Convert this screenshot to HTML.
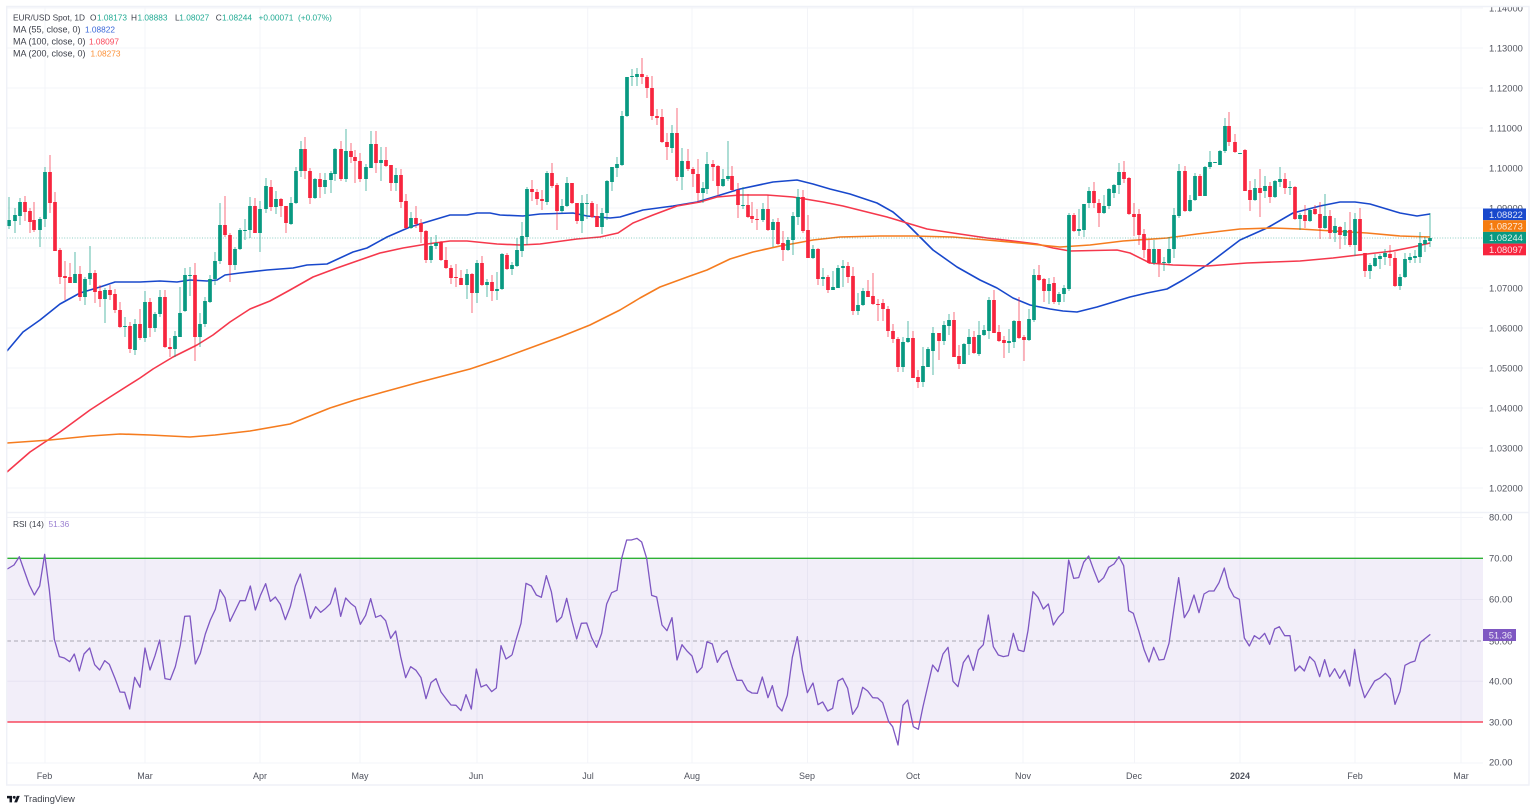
<!DOCTYPE html>
<html lang="en">
<head>
<meta charset="utf-8">
<title>EUR/USD Spot, 1D</title>
<style>
html,body{margin:0;padding:0;background:#fff;width:1536px;height:810px;overflow:hidden}
svg{display:block}
text{font-family:"Liberation Sans",sans-serif}
.ax{font-size:9.4px;fill:#50535e}
.lg{font-size:8.3px;fill:#3e414b}
.lm{font-size:9px;fill:#3e414b}
.gr{font-size:8.3px;fill:#22ab94}
.tg{font-size:9.4px;fill:#fff;fill-opacity:.85}
.tm{font-size:9px;fill:#50535e;text-anchor:middle}
.g{stroke:#f3f4f8;stroke-width:1;fill:none}
</style>
</head>
<body>
<svg width="1536" height="810" viewBox="0 0 1536 810" xmlns="http://www.w3.org/2000/svg">
<rect width="1536" height="810" fill="#fff"/>

<!-- grid -->
<path class="g" d="M45 7V763M145 7V763M260 7V763M360 7V763M477 7V763M587.7 7V763M692 7V763M807.5 7V763M913 7V763M1023 7V763M1134.5 7V763M1240 7V763M1355 7V763M1461 7V763"/>
<path class="g" d="M7 8H1483M7 48H1483M7 88H1483M7 128H1483M7 168H1483M7 208H1483M7 248H1483M7 288H1483M7 328H1483M7 368H1483M7 408H1483M7 448H1483M7 488H1483M7 517.5H1483M7 599.5H1483M7 681.3H1483"/>

<!-- moving averages -->
<path fill="none" stroke="#1848cc" stroke-width="1.6" stroke-linejoin="round" d="M7 351L23 332L40 320L60 304L80 293L100 287L115 282L140 282L160 281L177 282L190 280L207 281L217 280L225 275L240 273L267 270L293 268L307 265L327 264L353 252L367 248L387 237L410 227L430 221L450 215L467 215L477 213L490 213L500 215L523 216L540 214L573 213L587 216L610 218L620 217L643 210L673 206L697 202L717 196L740 189L773 182L797 180L813 184L830 189L850 194L877 203L893 212L907 224L920 237L933 250L957 267L980 280L997 288L1013 298L1030 305L1050 309L1063 311L1077 312L1097 307L1130 297L1147 293L1167 289L1183 280L1207 265L1240 240L1267 228L1293 213L1320 206L1340 202L1355 202L1370 204L1390 210L1400 213L1417 216L1430 214"/>
<path fill="none" stroke="#f5384c" stroke-width="1.6" stroke-linejoin="round" d="M7 472L30 452L60 432L90 410L110 397L140 378L153 369L173 357L197 345L213 335L230 322L250 309L270 301L290 290L313 277L337 268L357 261L380 253L403 248L427 244L450 241L467 241L497 244L520 245L540 244L577 239L600 237L618 233L633 223L653 215L677 206L700 202L717 197L740 195L767 195L793 197L823 202L843 206L867 212L887 217L907 223L927 229L953 233L987 238L1013 241L1037 244L1053 248L1070 251L1117 250L1130 253L1150 263L1173 265L1207 266L1247 263L1273 262L1300 261L1333 258L1367 254L1393 251L1413 247L1430 243"/>
<path fill="none" stroke="#f57c1f" stroke-width="1.6" stroke-linejoin="round" d="M7 443L50 440L90 436L120 434L150 435L190 437L215 435L250 431L290 424L310 416L330 408L355 400L380 393L420 382L470 369L500 359L530 348L560 337L590 325L620 310L640 298L660 287L690 276L707 270L730 259L753 252L780 246L797 243L813 240L840 237L880 236L913 236L953 237L987 240L1020 243L1040 245L1060 247L1090 245L1123 241L1167 238L1197 234L1240 229L1273 228L1300 229L1333 231L1367 233L1400 236L1430 237"/>

<!-- last price line -->
<path d="M7 238H1483" stroke="#089981" stroke-opacity=".45" stroke-width="1" stroke-dasharray="1 1.6" fill="none"/>

<!-- candle wicks -->
<path fill="none" stroke="#089981" stroke-opacity=".6" stroke-width="1.1" d="M9 197V229M15 208V233M20 198V225M40 217V247M45 167V227M75 252V283M85 277V305M90 246V285M105 288V323M125 317V337M135 319V355M145 291V342M155 312V332M160 290V317M175 331V357M180 287V337M185 268V312M190 267V296M200 313V347M205 297V327M210 275V303M215 252V285M220 203V264M235 247V270M240 228V250M245 219V240M250 197V238M260 201V252M266 178V213M276 191V214M291 197V225M296 167V204M301 141V177M315 178V199M325 173V194M331 171V193M335 148V181M346 129V182M366 164V191M371 131V168M381 147V181M396 168V191M411 212V229M431 237V263M436 235V249M467 269V299M477 260V303M487 279V297M497 272V300M502 253V290M512 262V275M517 238V267M522 222V257M527 187V245M547 171V205M562 199V213M567 177V207M582 195V233M587 194V219M602 208V234M607 180V220M612 167V191M617 157V177M622 111V166M627 77V117M632 69V86M637 68V86M672 125V153M682 148V190M703 182V203M707 152V194M723 169V187M728 141V181M743 187V209M763 203V222M773 219V247M788 237V251M793 212V255M798 189V225M813 245V259M823 268V286M833 271V290M838 265V288M843 260V287M858 293V315M863 288V306M903 337V372M908 321V343M923 347V387M928 347V367M933 327V375M944 321V345M949 314V335M964 343V364M969 329V355M979 321V356M984 325V336M989 297V339M1009 329V353M1014 320V348M1029 309V341M1034 269V322M1049 278V304M1059 292V305M1064 285V302M1069 213V291M1079 209V236M1084 204V237M1089 187V208M1104 195V214M1109 188V209M1114 184V198M1119 163V194M1154 240V265M1164 257V271M1169 237V264M1174 208V258M1179 164V218M1190 195V212M1195 173V201M1205 166V196M1210 151V169M1220 150V165M1225 118V153M1255 179V201M1265 176V198M1275 180V198M1280 167V187M1290 181V195M1300 213V230M1310 208V222M1325 194V229M1335 218V242M1345 222V245M1355 213V256M1370 263V279M1375 254V267M1380 254V269M1385 249V265M1400 274V290M1405 253V278M1410 253V263M1415 250V263M1420 232V263M1425 237V252M1430 213V247"/>
<path fill="none" stroke="#f7253e" stroke-opacity=".6" stroke-width="1.1" d="M25 196V221M30 208V233M34 202V232M50 155V213M55 192V251M60 248V284M65 261V300M70 263V283M80 266V301M95 270V303M100 285V307M110 285V300M115 289V313M120 302V328M130 322V353M140 309V340M150 298V337M165 290V348M170 338V357M195 263V361M225 196V237M230 233V282M255 198V233M271 180V211M281 198V217M286 206V233M305 137V179M310 168V204M320 173V198M341 141V181M351 143V163M355 150V183M360 153V182M376 131V173M386 147V167M391 165V191M401 169V208M406 194V229M416 206V228M421 219V243M426 230V263M441 241V261M446 247V269M451 265V284M456 264V287M461 270V285M472 273V313M482 256V286M492 275V301M507 253V270M532 180V201M537 189V205M542 190V210M552 163V188M557 183V230M572 183V204M577 203V224M592 201V218M597 204V227M642 58V84M647 75V98M652 76V120M657 109V125M662 109V143M667 133V160M677 108V181M688 149V171M693 167V187M698 159V201M713 160V181M718 165V196M732 166V191M738 183V218M748 194V218M752 202V223M757 209V230M768 195V231M778 218V245M783 231V261M803 190V233M808 215V258M818 248V285M828 275V293M848 262V283M853 267V315M868 280V297M873 273V305M878 299V321M883 299V321M888 306V337M893 324V343M898 337V372M913 331V378M918 370V388M939 333V360M954 312V357M959 345V369M974 331V354M994 290V333M999 325V342M1004 336V358M1019 297V339M1024 335V361M1039 265V281M1044 278V302M1054 277V304M1074 213V232M1094 182V208M1099 199V227M1124 161V183M1129 177V215M1134 203V236M1139 209V245M1144 229V258M1149 240V264M1159 249V277M1185 166V212M1200 174V196M1229 112V146M1235 134V153M1245 149V191M1250 181V211M1260 169V217M1270 182V203M1285 173V194M1295 186V220M1305 205V228M1315 205V215M1320 202V239M1330 210V239M1340 226V249M1350 212V247M1360 208V251M1365 253V277M1390 245V266M1395 252V287"/>
<!-- candle bodies -->
<path fill="none" stroke="#089981" stroke-width="3.7" d="M9 220V226M15 215V221M20 202V216M40 219V230M45 172V219M75 274V283M85 279V297M90 273V279M105 290V299M125 326V327M135 324V350M145 302V338M155 314V328M160 297V314M175 336V349M180 313V337M185 275V311M190 275V276M200 324V337M205 301V324M210 279V302M215 261V279M220 225V261M235 249V265M240 230V249M245 230V231M250 206V230M260 209V233M266 186V209M276 199V207M291 203V224M296 171V203M301 149V171M315 179V198M325 180V187M331 173V180M335 149V174M346 151V179M366 167V179M371 144V168M381 160V163M396 175V183M411 218V228M431 246V260M436 243V246M467 274V285M477 263V293M487 282V285M497 289V291M502 254V289M512 265V269M517 250V266M522 236V251M527 189V237M547 173V202M562 206V211M567 183V206M582 203V221M587 203V204M602 213V227M607 181V213M612 167V182M617 164V168M622 116V165M627 77V116M632 76V77M637 74V77M672 133V148M682 161V177M703 188V193M707 164V189M723 179V186M728 176V179M743 205V206M763 209V220M773 222V230M788 240V250M793 216V240M798 197V217M813 249V258M823 277V279M833 287V290M838 268V288M843 266V268M858 305V311M863 291V305M903 342V367M908 338V342M923 366V382M928 349V367M933 333V351M944 325V341M949 320V326M964 344V364M969 337V344M979 335V354M984 330V335M989 300V331M1009 341V343M1014 321V342M1029 319V340M1034 275V320M1049 284V291M1059 294V302M1064 288V294M1069 215V289M1079 229V231M1084 204V230M1089 191V203M1104 206V213M1109 189V206M1114 185V193M1119 172V185M1154 249V263M1164 262V263M1169 249V263M1174 215V249M1179 171V216M1190 200V211M1195 176V200M1205 167V196M1210 162V167M1215 162V163M1220 151V165M1225 126V151M1240 153V154M1255 188V200M1265 186V191M1275 181V197M1280 179V182M1290 187V188M1300 215V219M1310 210V221M1325 216V228M1335 226V233M1345 230V236M1355 219V245M1370 265V271M1375 258V266M1380 256V259M1385 253V257M1400 277V286M1405 259V277M1410 257V260M1415 256V258M1420 243V257M1425 240V244M1430 238V241"/>
<path fill="none" stroke="#f7253e" stroke-width="3.7" d="M25 202V212M30 211V222M34 220V230M50 172V203M55 202V251M60 250V277M65 276V278M70 277V283M80 274V297M95 273V292M100 291V299M110 290V295M115 294V310M120 310V327M130 326V349M140 324V338M150 302V328M165 297V347M170 347V349M195 275V337M225 225V235M230 235V265M255 206V233M271 187V207M281 199V206M286 206V223M305 149V171M310 171V198M320 179V187M341 149V179M351 151V157M355 157V161M360 161V179M376 144V163M386 160V166M391 165V183M401 175V202M406 201V228M416 218V224M421 223V232M426 231V260M441 242V260M446 260V268M451 268V278M456 277V278M461 278V285M472 274V293M482 263V285M492 282V291M507 255V269M532 189V192M537 192V199M542 199V201M552 173V186M557 185V211M572 183V203M577 203V221M592 203V217M597 216V227M642 74V77M647 77V88M652 88V116M657 116V118M662 117V142M667 142V147M677 133V177M688 161V169M693 169V174M698 174V193M713 164V167M718 166V186M732 176V190M738 190V205M748 205V217M752 216V219M757 219V220M768 209V230M778 222V244M783 243V250M803 197V231M808 230V258M818 249V279M828 277V290M848 266V277M853 276V311M868 291V297M873 296V304M878 304V305M883 303V309M888 309V331M893 331V339M898 339V367M913 338V378M918 377V382M939 333V341M954 320V357M959 356V364M974 337V353M994 300V333M999 332V341M1004 340V343M1019 321V338M1024 337V340M1039 275V280M1044 279V291M1054 283V302M1074 215V231M1094 191V203M1099 203V213M1124 172V179M1129 178V214M1134 214V217M1139 214V235M1144 234V250M1149 249V263M1159 249V263M1185 171V211M1200 176V196M1229 126V142M1235 142V152M1245 150V191M1250 190V200M1260 188V193M1270 186V197M1285 179V188M1295 187V219M1305 215V221M1315 209V214M1320 214V228M1330 216V233M1340 227V235M1350 230V245M1360 219V251M1365 253V271M1390 254V258M1395 258V286"/>

<!-- RSI -->
<rect x="7" y="558" width="1476" height="164" fill="#7e57c2" fill-opacity=".1"/>
<path d="M7 641H1483" stroke="#aaa8b4" stroke-width="1" stroke-dasharray="4 3" fill="none"/>
<path d="M7 558.3H1483" stroke="#2eb135" stroke-width="1.3" fill="none"/>
<path d="M7 722H1483" stroke="#f7253e" stroke-width="1.3" fill="none"/>
<g fill="none" stroke="#7e57c2" stroke-width="3.9" stroke-linejoin="round">
<path transform="translate(0 510) scale(.33333)" d="M22 177L42 165L58 140L72 180L88 225L103 255L119 228L134 133L148 240L163 388L178 440L193 444L209 455L223 432L238 483L252 432L269 414L284 464L299 480L314 452L328 463L345 505L360 546L374 547L389 597L404 502L420 532L435 414L450 480L465 437L479 390L495 506L511 509L526 470L541 405L554 319L570 318L586 462L601 430L616 372L631 330L646 298L660 239L675 263L690 334L705 303L720 272L736 272L751 228L766 300L781 257L797 221L811 274L826 261L841 283L856 329L871 290L886 228L901 192L916 256L931 325L947 290L962 307L977 295L991 281L1006 234L1022 319L1037 264L1052 280L1066 291L1081 343L1097 316L1112 266L1127 322L1142 316L1157 332L1172 385L1187 363L1202 440L1217 503L1232 470L1248 481L1263 503L1278 566L1293 518L1308 506L1323 546L1338 566L1353 585L1368 586L1383 602L1398 554L1414 597L1429 477L1443 531L1459 524L1475 545L1489 534L1503 407L1518 447L1536 435"/>
<path transform="translate(512 510) scale(.33333)" d="M0 435L12 390L27 340L42 220L58 228L73 255L88 262L103 197L118 245L134 336L149 321L164 265L179 330L194 387L208 340L224 339L239 383L254 412L269 370L284 282L299 248L315 241L329 145L344 90L358 90L375 85L389 96L404 145L419 256L434 261L450 345L465 362L480 323L495 450L510 404L525 423L540 438L555 488L570 472L585 395L601 402L616 457L630 433L645 422L660 470L675 511L690 511L706 541L720 549L736 550L751 501L768 563L781 527L796 588L810 603L826 556L841 442L856 380L871 480L886 548L903 519L918 584L932 576L947 603L962 595L978 513L992 505L1007 535L1022 613L1037 590L1052 532L1067 543L1082 563L1097 564L1112 578L1130 635L1142 650L1158 705L1173 586L1187 570L1204 650L1219 658L1233 590L1248 525L1262 465L1278 485L1293 432L1308 412L1323 514L1338 530L1354 458L1369 436L1384 481L1399 420L1414 404L1429 315L1444 410L1459 435L1474 440L1489 437L1504 370L1519 420L1536 425"/>
<path transform="translate(1024 510) scale(.33333)" d="M0 425L12 362L27 245L42 262L58 297L73 282L88 345L103 322L118 306L134 150L149 205L164 203L179 157L194 138L210 182L224 217L239 203L254 172L270 162L285 140L299 167L314 302L328 310L345 365L360 418L375 456L389 412L405 450L420 448L435 400L450 295L464 203L481 323L495 300L510 255L525 308L540 252L555 243L570 243L585 218L601 174L615 232L630 260L646 268L661 384L676 408L691 377L706 387L722 370L737 403L752 357L766 350L782 377L798 377L813 483L827 468L841 483L857 440L872 455L887 500L902 449L917 500L932 476L947 505L962 480L977 528L992 418L1007 512L1022 563L1037 538L1052 513L1067 505L1084 490L1099 506L1113 583L1128 545L1143 466L1158 458L1173 453L1189 397L1204 385L1219 373"/>
</g>

<!-- price axis -->
<g class="ax">
<text x="1489" y="11.3">1.14000</text>
<text x="1489" y="51.3">1.13000</text>
<text x="1489" y="91.3">1.12000</text>
<text x="1489" y="131.3">1.11000</text>
<text x="1489" y="171.3">1.10000</text>
<text x="1489" y="211.3">1.09000</text>
<text x="1489" y="291.3">1.07000</text>
<text x="1489" y="331.3">1.06000</text>
<text x="1489" y="371.3">1.05000</text>
<text x="1489" y="411.3">1.04000</text>
<text x="1489" y="451.3">1.03000</text>
<text x="1489" y="491.3">1.02000</text>
<text x="1489" y="520.6">80.00</text>
<text x="1489" y="561.6">70.00</text>
<text x="1489" y="602.6">60.00</text>
<text x="1489" y="644.3">50.00</text>
<text x="1489" y="684.6">40.00</text>
<text x="1489" y="725.3">30.00</text>
<text x="1489" y="765.6">20.00</text>
</g>

<!-- price tags -->
<rect x="1483" y="208.5" width="43" height="11.7" fill="#1848cc"/>
<rect x="1483" y="220.2" width="43" height="11.7" fill="#f57c0f"/>
<rect x="1483" y="231.9" width="43" height="11.7" fill="#089981"/>
<rect x="1483" y="243.6" width="43" height="11.7" fill="#f7253e"/>
<text class="tg" x="1489" y="217.8">1.08822</text>
<text class="tg" x="1489" y="229.5">1.08273</text>
<text class="tg" x="1489" y="241.2">1.08244</text>
<text class="tg" x="1489" y="252.9">1.08097</text>
<rect x="1483" y="629" width="33" height="12" fill="#7e57c2"/>
<text class="tg" x="1488.7" y="638.4">51.36</text>

<!-- time axis -->
<path d="M7 763H1483" stroke="#f3f4f8" stroke-width="1" fill="none"/>
<g class="tm">
<text x="44.5" y="779">Feb</text>
<text x="145" y="779">Mar</text>
<text x="260" y="779">Apr</text>
<text x="360" y="779">May</text>
<text x="476" y="779">Jun</text>
<text x="588" y="779">Jul</text>
<text x="692" y="779">Aug</text>
<text x="807" y="779">Sep</text>
<text x="913" y="779">Oct</text>
<text x="1023" y="779">Nov</text>
<text x="1134" y="779">Dec</text>
<text x="1240" y="779" font-weight="700">2024</text>
<text x="1355" y="779">Feb</text>
<text x="1461" y="779">Mar</text>
</g>

<!-- frame -->
<rect x="0" y="0" width="1536" height="6" fill="#fff"/>
<path d="M6.7 6.5H1529V785H6.7Z" fill="none" stroke="#eff1f7" stroke-width="1.4"/>
<path d="M7 512.5H1529" stroke="#eff1f7" stroke-width="1.4" fill="none"/>

<!-- legend -->
<text class="lg" x="13" y="20.6">EUR/USD Spot, 1D</text>
<text class="lg" x="90" y="20.6">O</text><text class="gr" x="97" y="20.6">1.08173</text>
<text class="lg" x="131" y="20.6">H</text><text class="gr" x="137.5" y="20.6">1.08883</text>
<text class="lg" x="175" y="20.6">L</text><text class="gr" x="179.3" y="20.6">1.08027</text>
<text class="lg" x="215.7" y="20.6">C</text><text class="gr" x="222" y="20.6">1.08244</text>
<text class="gr" x="258.5" y="20.6">+0.00071</text><text class="gr" x="298" y="20.6">(+0.07%)</text>
<text class="lm" x="13" y="32.6">MA (55, close, 0)</text><text class="lg" x="85" y="32.6" style="fill:#3b68d8">1.08822</text>
<text class="lm" x="13" y="44.4">MA (100, close, 0)</text><text class="lg" x="89" y="44.4" style="fill:#f9495c">1.08097</text>
<text class="lm" x="13" y="56.4">MA (200, close, 0)</text><text class="lg" x="90.5" y="56.4" style="fill:#fb9138">1.08273</text>
<text class="lg" x="13" y="527">RSI (14)</text><text class="lg" x="48.5" y="527" style="fill:#9a7fd0">51.36</text>

<!-- TradingView logo -->
<g transform="translate(7 794.4) scale(.36)" fill="#131722"><path d="M14 22H7V11H0V4h14v18zM28 22h-8l7.5-18h8L28 22z"/><circle cx="20" cy="8" r="4"/></g>
<text x="23.7" y="801.8" style="font-size:9.3px;fill:#3a3d46">TradingView</text>
</svg>
</body>
</html>
